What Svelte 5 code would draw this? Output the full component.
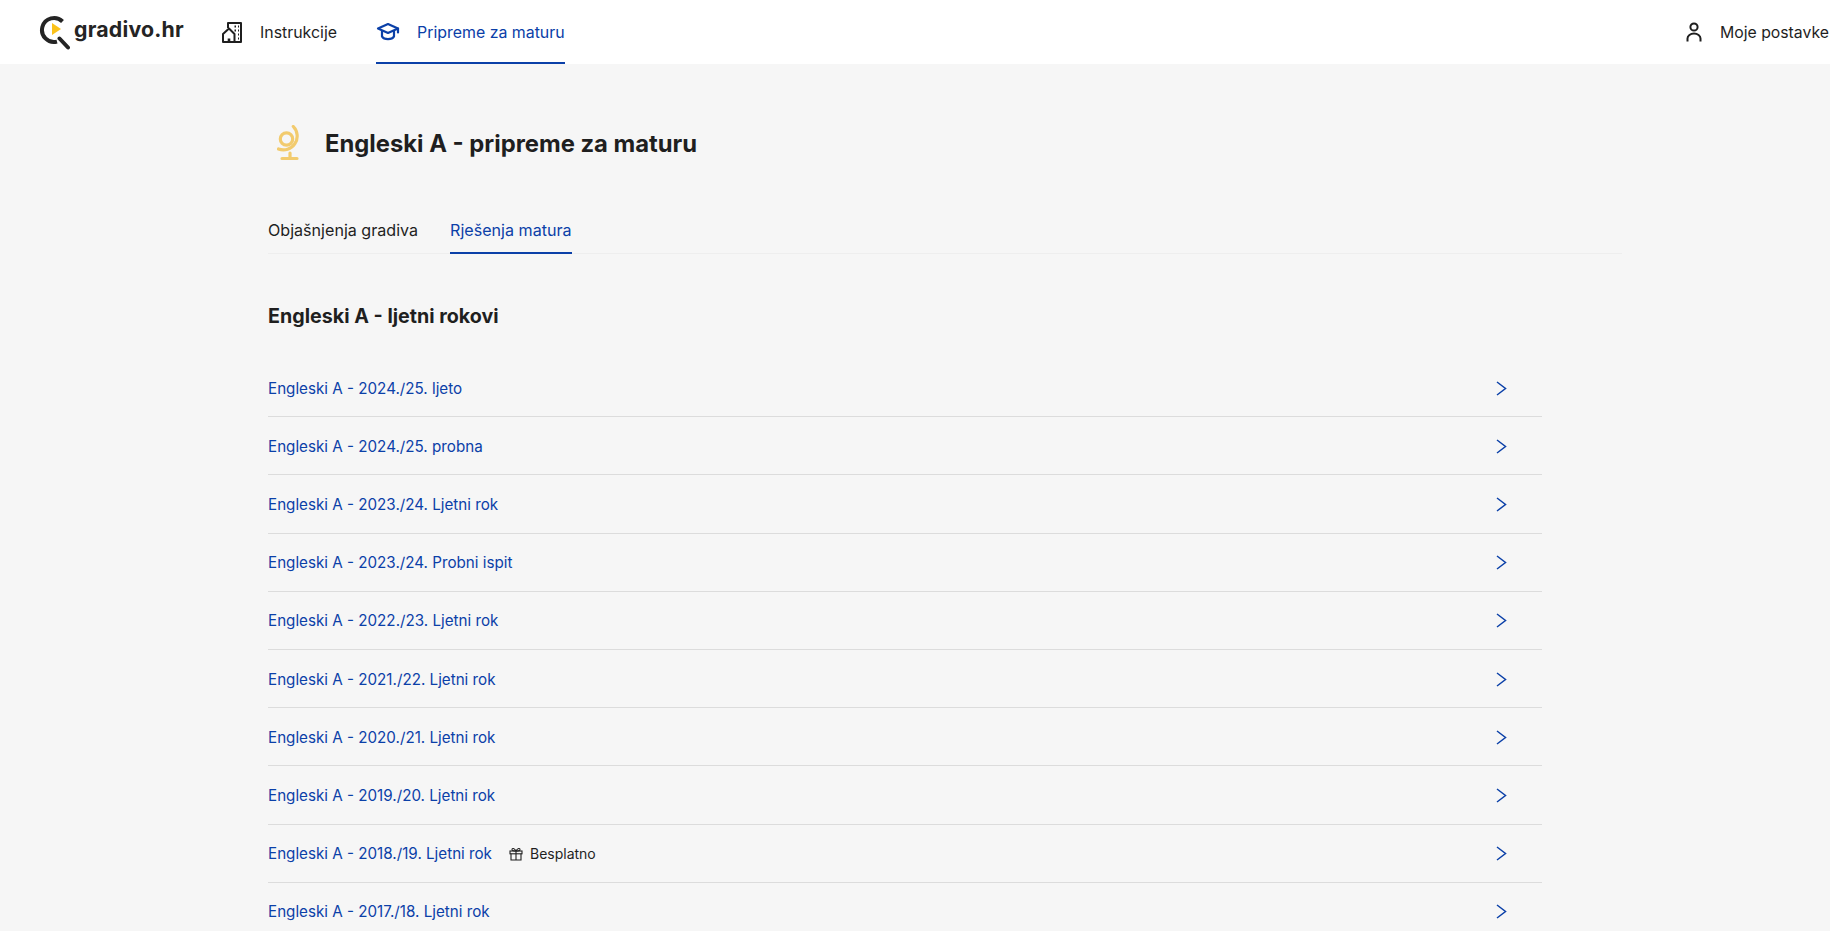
<script>
  const rows = [
    { t: 'Engleski A - 2024./25. ljeto' },
    { t: 'Engleski A - 2024./25. probna' },
    { t: 'Engleski A - 2023./24. Ljetni rok' },
    { t: 'Engleski A - 2023./24. Probni ispit' },
    { t: 'Engleski A - 2022./23. Ljetni rok' },
    { t: 'Engleski A - 2021./22. Ljetni rok' },
    { t: 'Engleski A - 2020./21. Ljetni rok' },
    { t: 'Engleski A - 2019./20. Ljetni rok' },
    { t: 'Engleski A - 2018./19. Ljetni rok', free: true },
    { t: 'Engleski A - 2017./18. Ljetni rok' }
  ];
</script>

<div class="page">
  <header class="top">
    <div class="logo">
      <svg class="logo-mark" width="32" height="36" viewBox="0 0 32 36" fill="none">
        <path d="M24.500 6.500A12 12 0 1 0 19 26.600" stroke="#242424" stroke-width="4"/>
        <path d="M21.500 23.500l8.500 9" stroke="#242424" stroke-width="4" stroke-linecap="round"/>
        <path d="M14 8l9 6-9 6z" fill="#fbc21a"/>
      </svg>
      <span class="logo-text">gradivo.hr</span>
    </div>
    <nav class="nav">
      <a class="nav-item">
        <svg width="22" height="22" viewBox="0 0 22 22" fill="none" stroke="#1f1f1f" stroke-width="2" stroke-linejoin="round">
          <path d="M7 7V2h13v19H2v-8l6-5.500L13.500 13v8"/>
          <path d="M8 21v-3.500" stroke-width="2.600"/>
          <path d="M13.500 5.500h1.500M17 5.500h1M13.500 9.500h1.500M17 9.500h1M17 13.500h1M17 17.500h1" stroke-width="1.800"/>
        </svg>
        <span>Instrukcije</span>
      </a>
      <a class="nav-item active">
        <svg width="24" height="22" viewBox="0 0 24 22" fill="none" stroke="#0b40a8" stroke-width="2.200" stroke-linejoin="round">
          <path d="M12 3L2 7.500l10 4.500 10-4.500z"/>
          <path d="M6 10v5.500c2 3.500 10 3.500 12 0V10"/>
          <path d="M22 7.500v4" stroke-linecap="round"/>
        </svg>
        <span>Pripreme za maturu</span>
      </a>
    </nav>
    <a class="settings">
      <svg width="16" height="20" viewBox="0 0 16 20" fill="none" stroke="#1f1f1f" stroke-width="2">
        <circle cx="8" cy="5" r="3.600"/>
        <path d="M1.500 19.500v-3a6.500 5 0 0 1 13 0v3"/>
      </svg>
      <span>Moje postavke</span>
    </a>
  </header>

  <main class="main">
    <div class="title-row">
      <svg width="30" height="38" viewBox="0 0 30 38" fill="none" stroke="#f2cb6e" stroke-width="3.200" stroke-linecap="round">
        <circle cx="9.500" cy="14" r="6.200"/>
        <path d="M16.300 1.500A13.800 13.800 0 0 1 1.500 24"/>
        <path d="M13 28v5M5 33.500h15"/>
      </svg>
      <h1>Engleski A - pripreme za maturu</h1>
    </div>

    <div class="tabs">
      <a class="tab">Objašnjenja gradiva</a>
      <a class="tab active">Rješenja matura</a>
    </div>

    <h2>Engleski A - ljetni rokovi</h2>

    <ul class="list">
      {#each rows as r}
        <li class="row">
          <a class="row-title">{r.t}</a>
          {#if r.free}
            <span class="free">
              <svg width="14" height="14" viewBox="0 0 14 14" fill="none" stroke="#1f1f1f" stroke-width="1.100">
                <rect x="1" y="4" width="12" height="2.800"/>
                <path d="M2 6.800V13h10V6.800M7 4v9"/>
                <path d="M7 4C5.500 1 3 .8 3 2.500 3 3.500 4.500 4 7 4zM7 4c1.500-3 4-3.200 4-1.500C11 3.500 9.500 4 7 4z"/>
              </svg>
              Besplatno
            </span>
          {/if}
          <svg class="chev" width="11" height="15" viewBox="0 0 11 15" fill="none" stroke="#0b40a8" stroke-width="1.500">
            <path d="M1 1l8.500 6.500L1 14"/>
          </svg>
        </li>
      {/each}
    </ul>
  </main>
</div>

<style>
  :global(body) {
    margin: 0;
    background: #f6f6f6;
    overflow: hidden;
  }
  .page {
    height: 931px;
    overflow: hidden;
    font-family: Inter, "Noto Sans", sans-serif;
    color: #1f1f1f;
  }
  .top {
    height: 64px;
    background: #fff;
    display: flex;
    align-items: stretch;
    padding-left: 38px;
    white-space: nowrap;
  }
  .logo {
    display: flex;
    align-items: center;
    gap: 4px;
    width: 183px;
  }
  .logo-mark {
    margin-top: 2px;
  }
  .logo-text {
    font-weight: 700;
    font-size: 21.300px;
    letter-spacing: 0.2px;
    color: #242424;
    margin-top: -6px;
  }
  .nav {
    display: flex;
    gap: 39px;
  }
  .nav-item {
    display: flex;
    align-items: center;
    gap: 17px;
    font-size: 15.900px;
    border-bottom: 2px solid transparent;
    border-top: 2px solid transparent;
  }
  .nav-item.active {
    color: #0b40a8;
    border-bottom-color: #0b40a8;
  }
  .settings {
    margin-left: auto;
    display: flex;
    align-items: center;
    gap: 18px;
    font-size: 15.800px;
    padding-right: 1px;
  }
  .main {
    padding: 62px 0 0 268px;
  }
  .title-row {
    display: flex;
    align-items: center;
    gap: 18px;
    padding-left: 9px;
    height: 36px;
  }
  h1 {
    margin: 0;
    font-size: 23.800px;
    font-weight: 700;
    line-height: 36px;
  }
  .tabs {
    display: flex;
    gap: 32px;
    width: 1354px;
    margin-top: 49px;
    border-bottom: 1px solid #eeeeee;
  }
  .tab {
    font-size: 16.100px;
    line-height: 20px;
    padding: 9px 0 12px;
    margin-bottom: -1px;
    border-bottom: 2px solid transparent;
  }
  .tab.active {
    color: #0b40a8;
    border-bottom-color: #0b40a8;
  }
  h2 {
    margin: 50px 0 0;
    font-size: 19.700px;
    font-weight: 700;
    line-height: 24px;
  }
  .list {
    list-style: none;
    margin: 31px 0 0;
    padding: 0;
    width: 1274px;
  }
  .row {
    box-sizing: border-box;
    height: 58.200px;
    display: flex;
    align-items: center;
    border-bottom: 1px solid #dcdcdc;
    padding: 1px 35px 0 0;
  }
  .row-title {
    color: #0b40a8;
    font-size: 15.200px;
  }
  .free {
    display: flex;
    align-items: center;
    gap: 7px;
    margin-left: 17px;
    font-size: 14px;
    color: #1f1f1f;
  }
  .chev {
    margin-left: auto;
  }
</style>
